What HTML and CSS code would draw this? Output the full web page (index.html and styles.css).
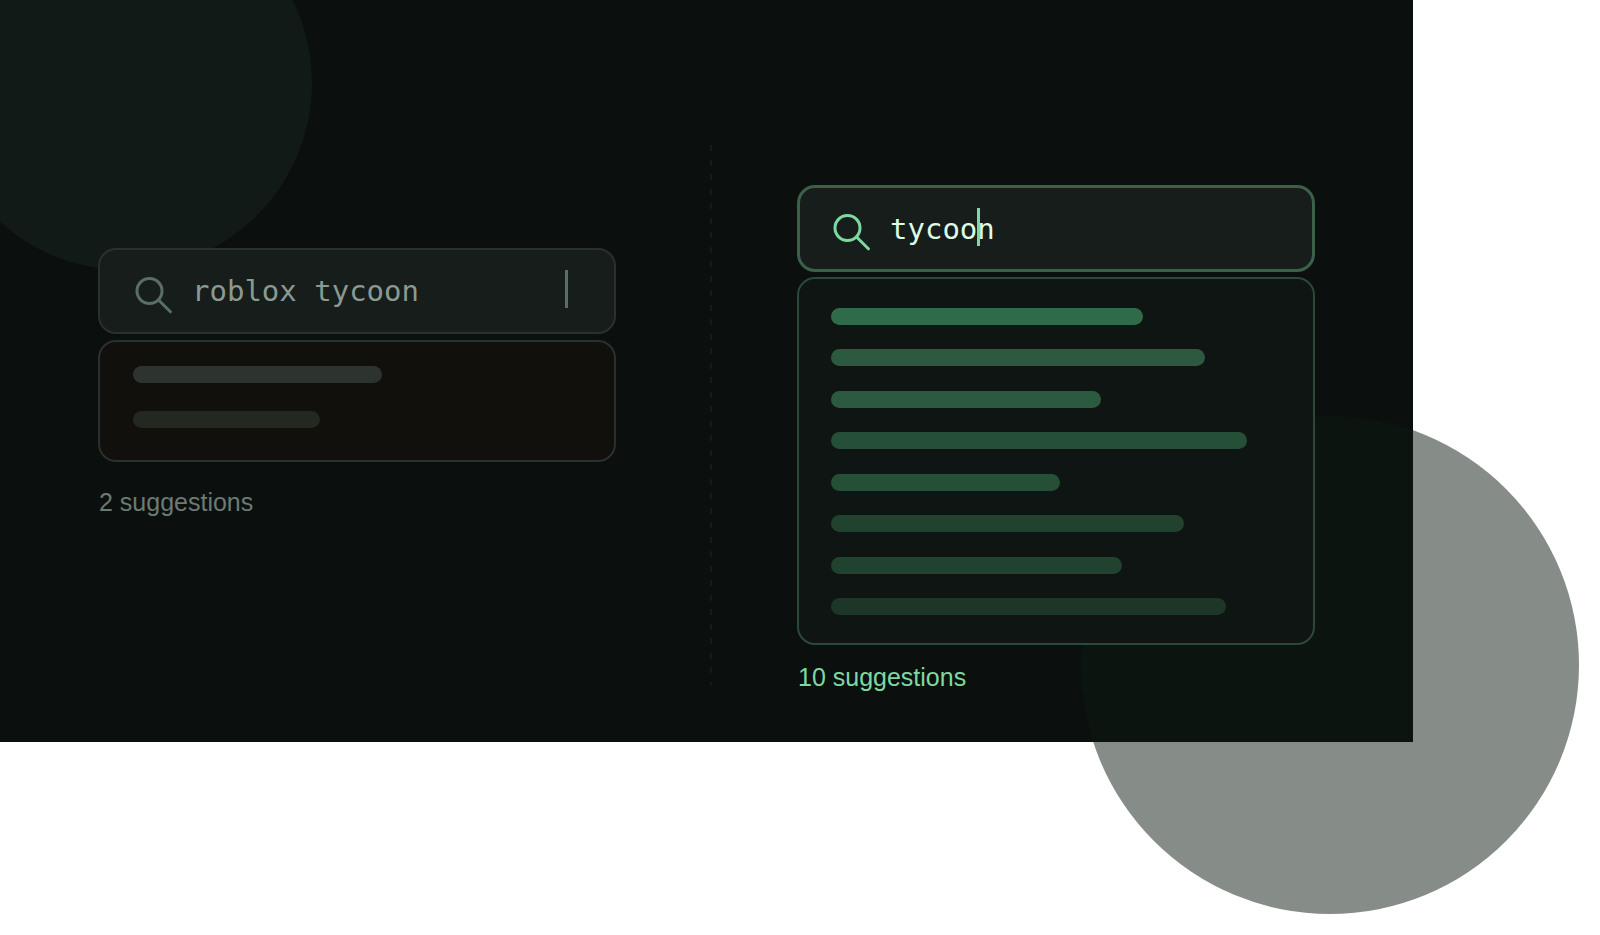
FILE: index.html
```html
<!DOCTYPE html>
<html lang="en">
<head>
<meta charset="utf-8">
<title>Search suggestions</title>
<link rel="stylesheet" href="styles.css">
</head>
<body>
<main class="stage">
  <div class="glow glow-top"></div>
  <div class="glow glow-bottom"></div>

  <section class="column column-muted">
    <div class="field">
      <svg class="icon" viewBox="0 0 38 38" aria-hidden="true"><circle cx="15.5" cy="15" r="12.5"/><path d="M24.8 24.3 36.4 35.8"/></svg>
      <input class="query" type="text" value="roblox tycoon" aria-label="Long search">
      <span class="caret"></span>
    </div>
    <div class="panel">
      <div class="bar" style="width: 249px"></div>
      <div class="bar" style="width: 187px"></div>
    </div>
    <p class="caption">2 suggestions</p>
  </section>

  <div class="divider"></div>

  <section class="column column-active">
    <div class="field">
      <svg class="icon" viewBox="0 0 38 38" aria-hidden="true"><circle cx="15.5" cy="15" r="12.5"/><path d="M24.8 24.3 36.4 35.8"/></svg>
      <input class="query" type="text" value="tycoon" aria-label="Short search">
      <span class="caret"></span>
    </div>
    <div class="panel">
      <div class="bar" style="width: 312px"></div>
      <div class="bar" style="width: 374px"></div>
      <div class="bar" style="width: 270px"></div>
      <div class="bar" style="width: 416px"></div>
      <div class="bar" style="width: 229px"></div>
      <div class="bar" style="width: 353px"></div>
      <div class="bar" style="width: 291px"></div>
      <div class="bar" style="width: 395px"></div>
    </div>
    <p class="caption">10 suggestions</p>
  </section>
</main>
</body>
</html>
```

FILE: styles.css
```css
* {
  box-sizing: border-box;
}

body {
  min-height: 100vh;
  margin: 0;
  background: #fff;
}

.stage {
  position: relative;
  display: grid;
  grid-template-columns: 1fr auto 1fr;
  align-items: start;
  margin-right: 187px;
  padding: 145px 98px 51px;
  background: #0b0f0e;
}

/* Background glows */
.glow {
  position: absolute;
  border-radius: 50%;
}

.glow-top {
  left: -62px;
  top: -104px;
  width: 374px;
  height: 374px;
  background: #111a17;
}

.glow-bottom {
  right: -166px;
  bottom: -172px;
  width: 498px;
  height: 498px;
  background: rgba(14, 25, 17, 0.5);
}

/* Columns */
.column {
  position: relative;
}

.column-muted {
  margin-top: 103px;
}

.column-active {
  margin-top: 40px;
}

.divider {
  width: 2px;
  height: 540px;
  margin: 0 85px 0 94px;
  background: repeating-linear-gradient(#161b1a 0 6px, transparent 6px 15px, #161b1a 15px 21px, transparent 21px 29px);
}

/* Search field */
.field {
  position: relative;
  display: flex;
  align-items: flex-start;
  gap: 20px;
  height: 86px;
  padding: 24px 34px 0;
  border: 2px solid #29312e;
  border-radius: 18px;
  background: #171d1b;
}

.icon {
  flex: none;
  width: 38px;
  height: 38px;
  margin-top: 2px;
  fill: none;
  stroke: #5a6e64;
  stroke-width: 3;
  stroke-linecap: round;
}

.query {
  flex: 1;
  min-width: 0;
  height: 34px;
  padding: 0;
  border: 0;
  outline: 0;
  background: transparent;
  color: #8a9a92;
  font: 29px/34px "DejaVu Sans Mono", monospace;
}

.caret {
  position: absolute;
  top: 20px;
  right: 46px;
  width: 3px;
  height: 38px;
  background: #5a6e64;
}

/* Suggestion list */
.panel {
  display: flex;
  flex-direction: column;
  gap: 28px;
  margin-top: 6px;
  padding: 24px 33px 32px;
  border: 2px solid #29312e;
  border-radius: 18px;
  background: #12100c;
}

.bar {
  height: 17px;
  border-radius: 9px;
  background: #2d332f;
}

.bar:nth-child(2) {
  background: #232821;
}

.caption {
  margin: 26px 0 0 1px;
  color: #6b7a73;
  font: 25px/28px "Liberation Sans", Arial, sans-serif;
}

/* Active variant */
.column-active .field {
  height: 87px;
  padding: 24px 32px 0;
  border: 3px solid #3d6049;
}

.column-active .icon {
  margin-top: 1px;
  stroke: #7dd8a1;
}

.column-active .query {
  color: #dcfce7;
}

.column-active .caret {
  left: 177px;
  background: #7dd8a1;
}

.column-active .panel {
  gap: 0;
  justify-content: space-between;
  height: 368px;
  margin-top: 5px;
  padding: 29px 32px 28px;
  border-color: #2c4838;
  background: #0f1513;
}

.column-active .bar {
  background: #2f6b4a;
}

.column-active .bar:nth-child(n + 2) {
  background: #2b5a41;
}

.column-active .bar:nth-child(n + 4) {
  background: #264f38;
}

.column-active .bar:nth-child(n + 6) {
  background: #21422f;
}

.column-active .bar:nth-child(n + 8) {
  background: #1c3728;
}

.column-active .caption {
  margin-top: 18px;
  color: #7dd8a1;
}
```
